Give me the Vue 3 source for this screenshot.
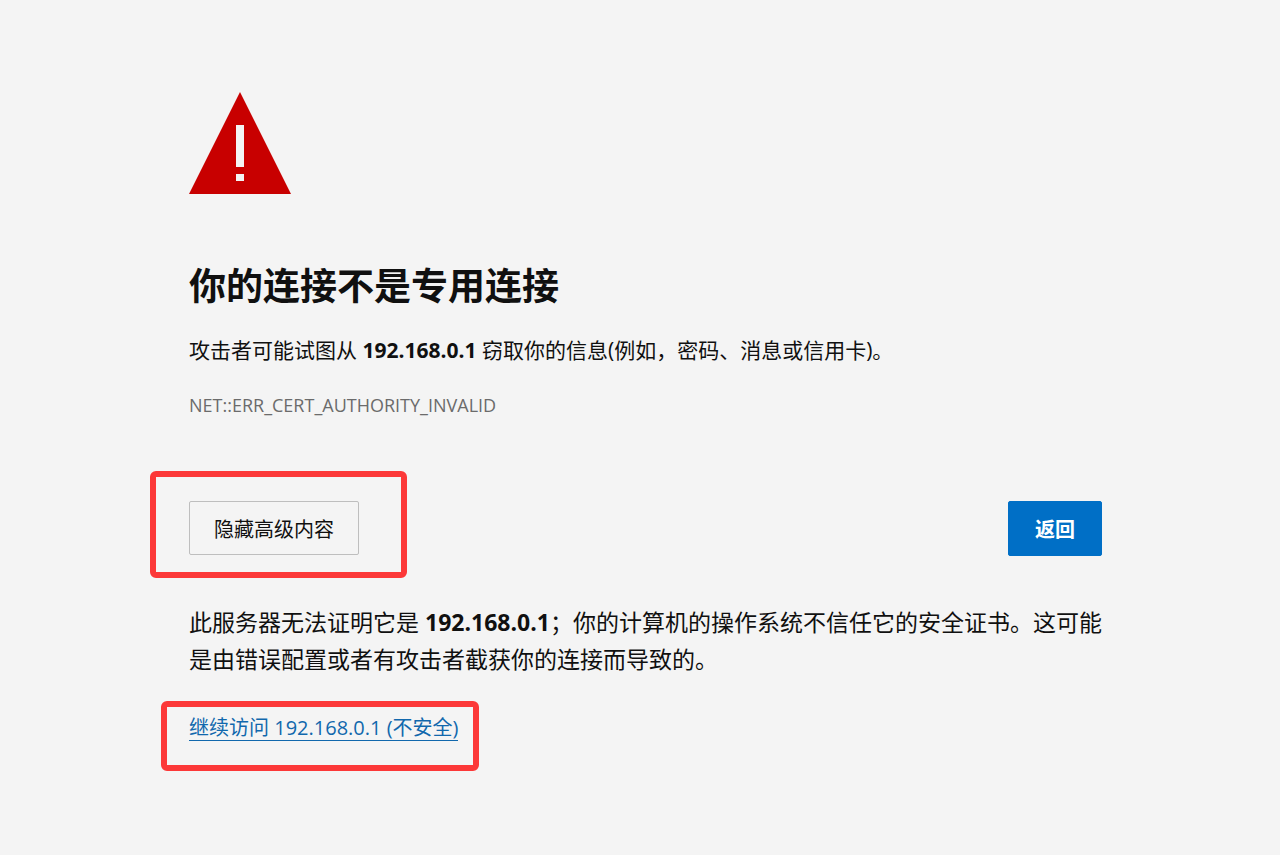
<script setup>
import { ref } from 'vue'

const host = '192.168.0.1'
const expanded = ref(true)
const goBack = () => window.history.back()
</script>

<template>
  <main class="page">
    <div class="content">
      <svg class="warning" viewBox="0 0 102 102" role="img" aria-label="警告">
        <path d="M51 0 102 102H0Z" fill="#c80000" />
        <path d="M47 33h8v42h-8zM47 82h8v7h-8z" fill="#f4f4f4" />
      </svg>

      <h1>你的连接不是专用连接</h1>
      <p class="summary">
        攻击者可能试图从 <strong>{{ host }}</strong> 窃取你的信息(例如，密码、消息或信用卡)。
      </p>
      <p class="code">NET::ERR_CERT_AUTHORITY_INVALID</p>

      <div class="actions">
        <div class="marked marked-toggle">
          <button class="toggle" type="button" :aria-expanded="expanded" @click="expanded = !expanded">
            {{ expanded ? '隐藏高级内容' : '高级' }}
          </button>
        </div>
        <button class="back" type="button" @click="goBack">返回</button>
      </div>

      <section v-if="expanded" class="details">
        <p>
          此服务器无法证明它是 <strong>{{ host }}</strong>；你的计算机的操作系统不信任它的安全证书。这可能是由错误配置或者有攻击者截获你的连接而导致的。
        </p>
        <div class="marked marked-link">
          <a href="#proceed">继续访问 {{ host }} (不安全)</a>
        </div>
      </section>
    </div>
  </main>
</template>

<style>
body {
  background: #fff;
}
</style>

<style scoped>
.page {
  box-sizing: border-box;
  min-height: calc(100vh - 13px);
  margin-right: 7px;
  padding: 92px 178px 80px 189px;
  background: #f4f4f4;
  color: #101010;
  font-family: "Open Sans", "Noto Sans CJK SC", sans-serif;
}

.warning {
  display: block;
  width: 102px;
  height: 102px;
}

h1 {
  margin: 64px 0 0;
  font-size: 37px;
  line-height: 56px;
  font-weight: 700;
}

p {
  margin: 0;
}

.summary {
  margin-top: 20px;
  font-size: 21px;
  line-height: 32px;
}

.code {
  margin-top: 25px;
  color: #6b6b6b;
  font-size: 18px;
  line-height: 28px;
}

.actions {
  display: flex;
  justify-content: space-between;
  align-items: flex-start;
  margin-top: 82px;
}

button {
  box-sizing: border-box;
  height: 54px;
  padding: 3px 24px 0;
  border: 1px solid #bebebe;
  border-radius: 2px;
  background: transparent;
  color: inherit;
  font-family: inherit;
  font-size: 20px;
  line-height: 28px;
  cursor: pointer;
}

.toggle {
  display: block;
}

.back {
  height: 55px;
  padding: 3px 26px 0;
  border-color: #006fc6;
  background: #006fc6;
  color: #fff;
  font-weight: 700;
}

.marked {
  position: relative;
  width: fit-content;
}

.marked::after {
  content: "";
  position: absolute;
  border: 6px solid #fc3838;
  border-radius: 6px;
  pointer-events: none;
}

.marked-toggle::after {
  inset: -30px -48px -23px -39px;
}

.marked-link::after {
  inset: -15px -21px -30px -28px;
}

.details {
  margin: 48px -10px 0 0;
  font-size: 23px;
  line-height: 37px;
}

.marked-link {
  margin-top: 38px;
  font-size: 20px;
}

a {
  display: block;
  border-bottom: 1px solid #1168ad;
  color: #1168ad;
  line-height: 24px;
  text-decoration: none;
}
</style>
